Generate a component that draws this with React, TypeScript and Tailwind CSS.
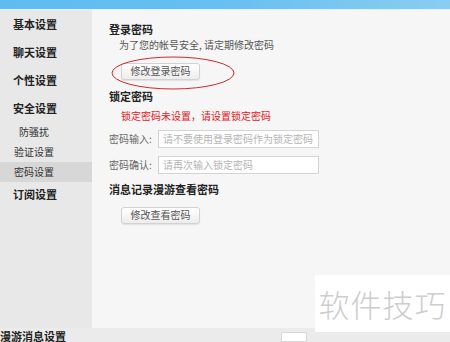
import React from "react";

const font = { fontFamily: '"Noto Sans CJK SC", "Noto Sans", sans-serif' };

function SideItem({ label, bold, sub, active, h }: { label: string; bold?: boolean; sub?: boolean; active?: boolean; h: string }) {
  return (
    <div
      className={`${h} flex items-center ${active ? "bg-[#d7d7d7]" : ""} ${sub ? (label.length === 3 ? "pl-[19px]" : "pl-[14px]") : "pl-[13px]"} ${bold ? "font-bold text-[11px] text-[#222]" : "text-[10px] text-[#333]"}`}
    >
      {label}
    </div>
  );
}

function Btn({ label }: { label: string }) {
  return (
    <div className="w-[79px] h-[17px] ml-[12px] flex items-center justify-center rounded-[3px] border border-[#d2d2d2] bg-gradient-to-b from-white to-[#ededed] shadow-[0_1px_1px_rgba(0,0,0,0.08)] text-[10px] text-[#555] leading-none">
      {label}
    </div>
  );
}

function Row({ label, ph, mt, h }: { label: string; ph: string; mt: string; h: string }) {
  return (
    <div className={`flex items-center ${mt}`}>
      <div className="w-[49px] text-[10px] text-[#666] leading-none">{label}</div>
      <div className={`w-[161px] ${h} border border-[#d4d4d4] bg-white flex items-center pl-[4px] text-[10px] text-[#b4b4b4] leading-none`}>
        {ph}
      </div>
    </div>
  );
}

export default function App() {
  return (
    <div className="relative w-[450px] h-[342px] overflow-hidden bg-[#f6f6f6] flex flex-col" style={font}>
      <div className="h-[9px] bg-gradient-to-r from-[#5fbcf1] via-[#66c0f1] to-[#8acdf0]" />
      <div className="h-px bg-[#dff4fd]" />
      <div className="flex h-[321px]">
        <div className="w-[92px] bg-[#e8e8e8] flex flex-col">
          <SideItem label="基本设置" bold h="h-[28px]" />
          <SideItem label="聊天设置" bold h="h-[28px]" />
          <SideItem label="个性设置" bold h="h-[28px]" />
          <SideItem label="安全设置" bold h="h-[28px]" />
          <SideItem label="防骚扰" sub h="h-[20px]" />
          <SideItem label="验证设置" sub h="h-[20px]" />
          <SideItem label="密码设置" sub active h="h-[20px]" />
          <SideItem label="订阅设置" bold h="h-[24px]" />
        </div>
        <div className="flex-1 bg-[#f6f6f6] pl-[17px] pt-[11px] flex flex-col">
          <div className="h-[16px] flex items-center text-[11px] font-bold text-[#222]">登录密码</div>
          <div className="h-[16px] flex items-center pl-[10px] text-[10px] text-[#555]">为了您的帐号安全, 请定期修改密码</div>
          <div className="relative mt-[10px]">
            <Btn label="修改登录密码" />
            <svg className="absolute left-[2px] top-[-7px]" width="126" height="36" viewBox="0 0 126 36">
              <ellipse cx="62" cy="17" rx="61" ry="16" fill="none" stroke="#d2282c" strokeWidth="1" />
            </svg>
          </div>
          <div className="h-[16px] mt-[8px] flex items-center text-[11px] font-bold text-[#222]">锁定密码</div>
          <div className="h-[16px] mt-[4px] flex items-center pl-[12px] text-[10px] text-[#e0201e]">锁定密码未设置，请设置锁定密码</div>
          <Row label="密码输入:" ph="请不要使用登录密码作为锁定密码" mt="mt-[6px]" h="h-[18px]" />
          <Row label="密码确认:" ph="请再次输入锁定密码" mt="mt-[8px]" h="h-[18px]" />
          <div className="h-[16px] mt-[7px] flex items-center text-[11px] font-bold text-[#222]">消息记录漫游查看密码</div>
          <div className="mt-[10px]">
            <Btn label="修改查看密码" />
          </div>
        </div>
      </div>
      <div className="flex-1 bg-[#ebebeb] flex items-start">
        <div className="text-[11px] font-bold text-[#222] leading-none mt-[3px] whitespace-nowrap">漫游消息设置</div>
        <div className="ml-[215px] mt-[4px] w-[26px] h-[10px] bg-white border border-[#d8d8d8] rounded-t-[2px]" />
      </div>
      <div className="absolute left-[315px] top-[275px] w-[135px] h-[57px] bg-white flex items-center justify-center">
        <span className="text-[31px] text-[#cdcdcd] tracking-[1px] leading-none" style={{ fontFamily: '"Noto Sans CJK SC", sans-serif', fontWeight: 300 }}>软件技巧</span>
      </div>
    </div>
  );
}
